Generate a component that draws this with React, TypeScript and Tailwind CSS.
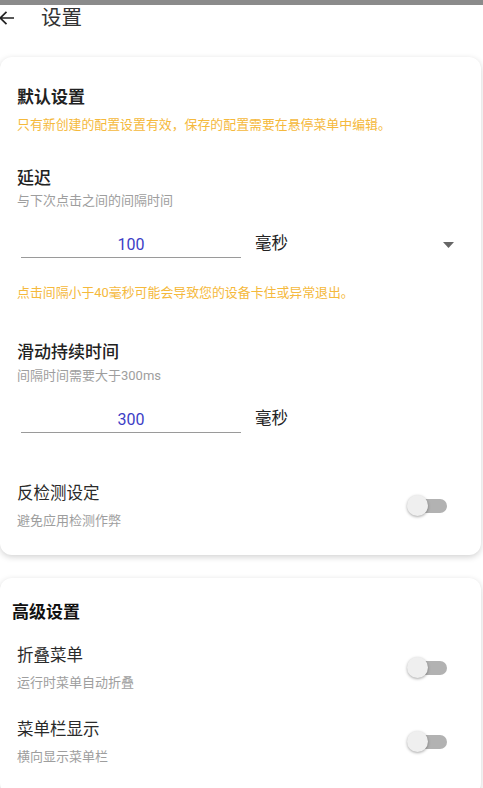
import React from "react";

const font = "font-['Roboto','Noto_Sans_CJK_SC',sans-serif]";

const Toggle = () => (
  <div className="relative w-[40px] h-[24px] mr-[34px] shrink-0">
    <div className="absolute left-[4px] top-[5px] w-[36px] h-[14px] rounded-full bg-[#b2b2b2]" />
    <div className="absolute left-0 top-[1px] w-[21px] h-[21px] rounded-full bg-[#efefef] shadow-[0_1px_3px_rgba(0,0,0,0.35)]" />
  </div>
);

const NumberField = ({ value, arrow }: { value: string; arrow?: boolean }) => (
  <div className="flex items-center mt-[20px] pl-[4px]">
    <div className="w-[220px] h-[29px] pt-[3px] border-b border-[#9a9a9a] flex items-center justify-center text-[16px] text-[#3d3dc6]">
      {value}
    </div>
    <div className="ml-[14px] text-[16.5px] leading-[24px] text-[#222]">毫秒</div>
    {arrow && (
      <svg className="ml-auto mr-[27px] mt-[2px]" width="11" height="6" viewBox="0 0 11 6">
        <path d="M0 0h11L5.5 6z" fill="#666" />
      </svg>
    )}
  </div>
);

const SwitchRow = ({ title, desc, top }: { title: string; desc: string; top: string }) => (
  <div className={`flex items-center ${top} pl-[17px]`}>
    <div className="flex-1">
      <div className="text-[16.5px] leading-[24px] text-[#2a2a2a]">{title}</div>
      <div className="mt-[7px] text-[13px] leading-[16px] text-[#9e9e9e]">{desc}</div>
    </div>
    <Toggle />
  </div>
);

export default function App() {
  return (
    <div className={`w-[483px] h-[788px] bg-white overflow-hidden ${font}`}>
      <div className="h-[5px] bg-[#8b8b8b]" />
      <div className="h-[26px] flex items-center">
        <svg width="16" height="16" viewBox="0 0 16 16" className="-ml-[1px]">
          <path d="M15 8H1.5M7.5 1.8L1.3 8l6.2 6.2" fill="none" stroke="#222" strokeWidth="1.7" />
        </svg>
        <div className="ml-[26px] text-[20.5px] leading-[28px] text-[#333]">设置</div>
      </div>

      <div className="mt-[26px] w-[481px] rounded-[12px] bg-white shadow-[0_2px_6px_rgba(0,0,0,0.18)] pt-[28px] pb-[26px]">
        <div className="pl-[17px]">
          <div className="text-[17px] leading-[24px] font-bold text-[#222]">默认设置</div>
          <div className="mt-[8px] text-[12.9px] leading-[16px] text-[#f5b93c]">
            只有新创建的配置设置有效，保存的配置需要在悬停菜单中编辑。
          </div>

          <div className="mt-[33px] text-[17px] leading-[24px] font-medium text-[#222]">延迟</div>
          <div className="mt-[3px] text-[13px] leading-[16px] text-[#9e9e9e]">与下次点击之间的间隔时间</div>
          <NumberField value="100" arrow />
          <div className="mt-[27px] text-[12.9px] leading-[16px] text-[#f5b93c]">
            点击间隔小于40毫秒可能会导致您的设备卡住或异常退出。
          </div>

          <div className="mt-[39px] text-[17px] leading-[24px] font-medium text-[#222]">滑动持续时间</div>
          <div className="mt-[4px] text-[13px] leading-[16px] text-[#9e9e9e]">间隔时间需要大于300ms</div>
          <NumberField value="300" />
        </div>
        <SwitchRow title="反检测设定" desc="避免应用检测作弊" top="mt-[49px]" />
      </div>

      <div className="mt-[23px] w-[481px] rounded-[12px] bg-white shadow-[0_2px_6px_rgba(0,0,0,0.18)] pt-[22px] pb-[30px]">
        <div className="pl-[12px] text-[17px] leading-[24px] font-bold text-[#111]">高级设置</div>
        <SwitchRow title="折叠菜单" desc="运行时菜单自动折叠" top="mt-[20px]" />
        <SwitchRow title="菜单栏显示" desc="横向显示菜单栏" top="mt-[27px]" />
      </div>
    </div>
  );
}
